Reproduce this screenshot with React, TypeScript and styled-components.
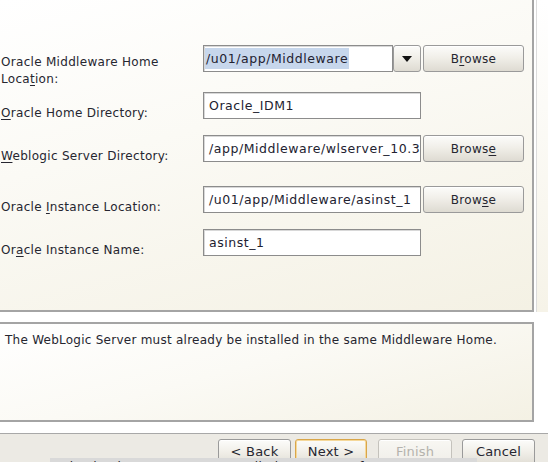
import React from 'react';
import styled, { createGlobalStyle, css } from 'styled-components';

const Global = createGlobalStyle`
  html, body { margin: 0; padding: 0; background: #ffffff; overflow: hidden; }
`;

const Window = styled.div`
  position: relative;
  width: 548px;
  height: 462px;
  overflow: hidden;
  display: flex;
  flex-direction: column;
  background: #ffffff;
  font-family: "DejaVu Sans", "Noto Sans", sans-serif;
  font-size: 12px;
  color: #262630;
`;

const Upper = styled.div`
  display: flex;
  height: 312px;
  flex: none;
`;

const FormPanel = styled.div`
  width: 534px;
  height: 312px;
  box-sizing: border-box;
  border-right: 2px solid #a4a4a4;
  border-bottom: 2px solid #a4a4a4;
  background: linear-gradient(165deg, #ffffff 0%, #fbfaf5 40%, #f4f1e4 100%);
  display: flex;
  flex-direction: column;
  padding-top: 45px;
`;

const SideStrip = styled.div`
  margin-left: 2px;
  flex: 1;
  border-left: 1px solid #dcdcdc;
  background: linear-gradient(180deg, #ffffff 0%, #f6f3e8 100%);
`;

const Row = styled.div<{ $gap: number }>`
  display: grid;
  grid-template-columns: 203px auto;
  grid-template-rows: 27px;
  align-items: start;
  margin-top: ${p => p.$gap}px;
`;

const Label = styled.div<{ $pad: number }>`
  padding-top: ${p => p.$pad}px;
  padding-left: 1px;
  line-height: 17px;
  letter-spacing: 0.3px;
  white-space: pre-line;
`;

const Mn = styled.span`
  text-decoration: underline;
  text-underline-offset: 2px;
`;

const Fields = styled.div`
  display: flex;
  align-items: center;
  gap: 2px;
`;

const Input = styled.div<{ $w: number; $combo?: boolean }>`
  box-sizing: border-box;
  width: ${p => p.$w}px;
  height: 27px;
  border: 1px solid #8c8c8c;
  box-shadow: inset 1px 1px 0 #d8d8d8;
  background: #ffffff;
  display: flex;
  align-items: center;
  padding-left: ${p => (p.$combo ? 1 : 5)}px;
  white-space: nowrap;
  overflow: hidden;
  font-size: 12.5px;
  letter-spacing: 0.55px;
  color: #222230;
`;

const Selected = styled.span`
  background: #c7d7ec;
  padding: 3px 1px 3px 1px;
`;

const buttonFace = css`
  box-sizing: border-box;
  border: 1px solid #9a9a9a;
  border-radius: 3px;
  background: linear-gradient(180deg, #fcfcfa 0%, #f1efe9 45%, #dedbd2 100%);
  box-shadow: inset 0 1px 0 #ffffff;
  font-family: inherit;
  font-size: 12px;
  color: #262630;
  display: flex;
  align-items: center;
  justify-content: center;
  padding: 0;
  white-space: pre;
`;

const DropButton = styled.div`
  ${buttonFace};
  width: 28px;
  height: 27px;
  margin-left: -2px;
`;

const BrowseButton = styled.div`
  ${buttonFace};
  width: 101px;
  height: 27px;
  letter-spacing: 0.3px;
`;

const MessageBox = styled.div`
  margin-top: 10px;
  margin-left: -2px;
  width: 536px;
  height: 100px;
  box-sizing: border-box;
  border: 2px solid #a4a4a4;
  background: linear-gradient(165deg, #ffffff 0%, #fbfaf5 45%, #f4f1e4 100%);
  padding: 9px 0 0 5px;
  letter-spacing: 0.25px;
  flex: none;
`;

const ButtonBar = styled.div`
  margin-top: 11px;
  flex: 1;
  border-top: 1px solid #a8a8a8;
  background: #eceae4;
  display: flex;
  padding: 5px 0 0 218px;
`;

const NavButton = styled.div<{ $gap: number; $w: number; $default?: boolean; $disabled?: boolean }>`
  ${buttonFace};
  margin-left: ${p => p.$gap}px;
  width: ${p => p.$w}px;
  height: 28px;
  align-items: flex-start;
  padding-top: 4px;
  font-size: 13px;
  letter-spacing: 0.2px;
  ${p => p.$default && css`
    border: 1px solid #d9a64a;
    box-shadow: inset 0 0 0 1px #f5d89a;
  `}
  ${p => p.$disabled && css`
    color: #b4b2ac;
    border-color: #c4c2bc;
    background: linear-gradient(180deg, #f8f7f3 0%, #efede7 100%);
  `}
`;

const Tip = styled.div`
  position: absolute;
  left: 50px;
  top: 458px;
  width: 427px;
  height: 16px;
  background: #d9d9d9;
  overflow: hidden;
  white-space: nowrap;
  font-size: 12px;
  line-height: 14px;
  padding-top: 2px;
  color: #222;
  letter-spacing: 0.3px;
`;

const DownArrow = () => (
  <svg width="10" height="6" viewBox="0 0 10 6">
    <path d="M0 0 L10 0 L5 6 Z" fill="#111" />
  </svg>
);

export default function App() {
  return (
    <Window>
      <Global />
      <Upper>
        <FormPanel>
          <Row $gap={0}>
            <Label $pad={9}>
              Oracle Middleware Home{'\n'}Loca<Mn>t</Mn>ion:
            </Label>
            <Fields>
              <Input $w={190} $combo>
                <Selected>/u01/app/Middleware</Selected>
              </Input>
              <DropButton>
                <DownArrow />
              </DropButton>
              <BrowseButton>
                <span>B<Mn>r</Mn>owse</span>
              </BrowseButton>
            </Fields>
          </Row>
          <Row $gap={20}>
            <Label $pad={13}>
              <Mn>O</Mn>racle Home Directory:
            </Label>
            <Fields>
              <Input $w={218}>Oracle_IDM1</Input>
            </Fields>
          </Row>
          <Row $gap={16}>
            <Label $pad={13}>
              <Mn>W</Mn>eblogic Server Directory:
            </Label>
            <Fields>
              <Input $w={218}>/app/Middleware/wlserver_10.3</Input>
              <BrowseButton>
                <span>Brows<Mn>e</Mn></span>
              </BrowseButton>
            </Fields>
          </Row>
          <Row $gap={24}>
            <Label $pad={13}>
              Oracle <Mn>I</Mn>nstance Location:
            </Label>
            <Fields>
              <Input $w={218}>/u01/app/Middleware/asinst_1</Input>
              <BrowseButton>
                <span>Brow<Mn>s</Mn>e</span>
              </BrowseButton>
            </Fields>
          </Row>
          <Row $gap={16}>
            <Label $pad={13}>
              Or<Mn>a</Mn>cle Instance Name:
            </Label>
            <Fields>
              <Input $w={218}>asinst_1</Input>
            </Fields>
          </Row>
        </FormPanel>
        <SideStrip />
      </Upper>
      <MessageBox>
        The WebLogic Server must already be installed in the same Middleware Home.
      </MessageBox>
      <ButtonBar>
        <NavButton $gap={0} $w={73}>
          <span>&lt; <Mn>B</Mn>ack</span>
        </NavButton>
        <NavButton $gap={4} $w={72} $default>
          <span><Mn>N</Mn>ext &gt;</span>
        </NavButton>
        <NavButton $gap={11} $w={74} $disabled>
          <span><Mn>F</Mn>inish</span>
        </NavButton>
        <NavButton $gap={10} $w={73}>
          <span>Cancel</span>
        </NavButton>
      </ButtonBar>
      <Tip>racle Identity Management Installation - Step 5 of 16</Tip>
    </Window>
  );
}
